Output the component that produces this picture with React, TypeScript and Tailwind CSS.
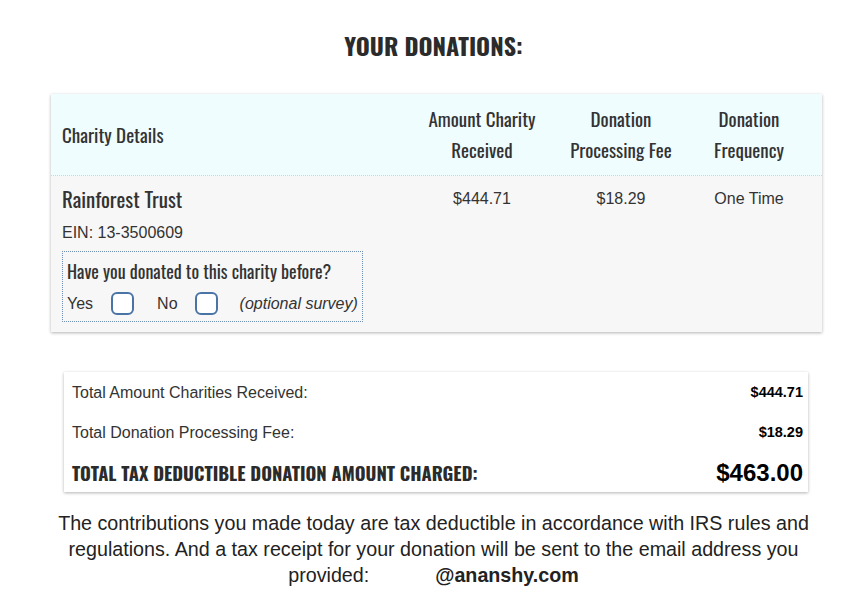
const cond = "font-['Oswald','Liberation_Sans_Narrow','DejaVu_Sans_Condensed',sans-serif] [font-stretch:condensed]";
const arial = "font-['Liberation_Sans',Arial,sans-serif]";

function Box() {
  return <span className="inline-block h-[23px] w-[23px] rounded-[6px] border-2 border-[#4a74a6] bg-white align-middle" />;
}

export default function App() {
  return (
    <div className={`min-h-screen bg-white text-[#333] ${arial}`}>
      <h1 className={`pt-[29px] text-center text-[24px] font-bold leading-[32px] text-[#2b2b2b] ${cond}`}>YOUR DONATIONS:</h1>

      <div className="mx-[51px] mt-[33px] w-[771px] shadow-[0_1px_3px_rgba(0,0,0,0.3)]">
        <div className={`grid grid-cols-[minmax(0,1fr)_138px_140px_116px] items-center border-b border-dotted border-[#c9d6da] bg-[#f0fdff] pb-[10px] pl-[11px] pr-[15px] pt-[9px] text-[19px] leading-[31px] text-[#333] ${cond}`}>
          <div>Charity Details</div>
          <div className="text-center">Amount Charity<br />Received</div>
          <div className="text-center">Donation<br />Processing Fee</div>
          <div className="text-center">Donation<br />Frequency</div>
        </div>
        <div className="grid grid-cols-[minmax(0,1fr)_138px_140px_116px] bg-[#f7f7f7] pb-[10px] pl-[11px] pr-[15px] pt-[10px]">
          <div>
            <div className={`text-[21px] leading-[26px] text-[#333] ${cond}`}>Rainforest Trust</div>
            <div className="mt-[12px] text-[16px] leading-[18px]">EIN: 13-3500609</div>
            <div className="mt-[9px] w-[301px] border border-dotted border-[#6f8fb5] px-[4px] pb-[6px] pt-[8px]">
              <div className={`text-[18px] leading-[22px] ${cond}`}>Have you donated to this charity before?</div>
              <div className="mt-[10px] flex h-[23px] items-center text-[16px]">
                <span>Yes</span>
                <span className="ml-[18px] flex"><Box /></span>
                <span className="ml-[23px]">No</span>
                <span className="ml-[17px] flex"><Box /></span>
                <span className="ml-[22px] italic">(optional survey)</span>
              </div>
            </div>
          </div>
          <div className="text-center text-[16px] leading-[26px]">$444.71</div>
          <div className="text-center text-[16px] leading-[26px]">$18.29</div>
          <div className="text-center text-[16px] leading-[26px]">One Time</div>
        </div>
      </div>

      <div className="mx-[64px] mt-[40px] w-[744px] pb-[6px] pl-[8px] pr-[5px] pt-[12px] shadow-[0_1px_3px_rgba(0,0,0,0.3)]">
        <div className="flex h-[18px] items-center justify-between text-[16px]">
          <span>Total Amount Charities Received:</span>
          <span className="text-[14.5px] font-bold text-black">$444.71</span>
        </div>
        <div className="mt-[22px] flex h-[18px] items-center justify-between text-[16px]">
          <span>Total Donation Processing Fee:</span>
          <span className="text-[14.5px] font-bold text-black">$18.29</span>
        </div>
        <div className="mt-[18px] flex h-[26px] items-center justify-between">
          <span className={`text-[18.5px] font-bold leading-[26px] text-[#2b2b2b] ${cond}`}>TOTAL TAX DEDUCTIBLE DONATION AMOUNT CHARGED:</span>
          <span className="text-[24px] font-bold text-black">$463.00</span>
        </div>
      </div>

      <p className="mx-auto mt-[18px] w-[780px] text-center text-[19.7px] leading-[26px] text-[#222]">
        The contributions you made today are tax deductible in accordance with IRS rules and regulations. And a tax receipt for your donation will be sent to the email address you provided:
        <span className="inline-block w-[66px]" />
        <span className="font-bold">@ananshy.com</span>
      </p>
    </div>
  );
}
